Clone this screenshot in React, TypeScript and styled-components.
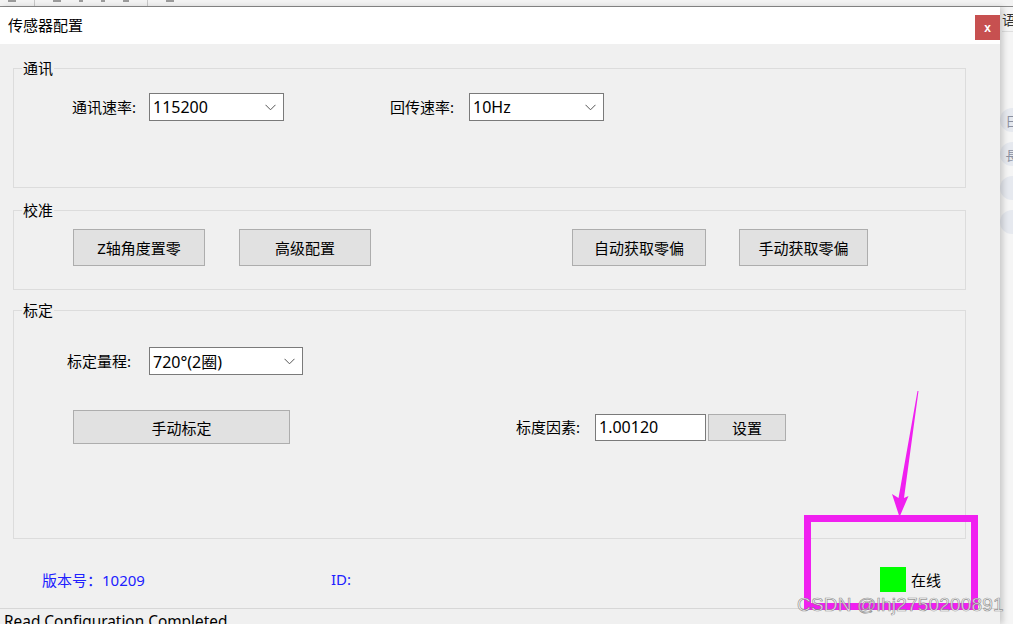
import styled, { createGlobalStyle } from 'styled-components'

const GlobalStyle = createGlobalStyle`
  html, body {
    margin: 0;
    padding: 0;
    background: #f4f4f4;
  }
  body {
    font-family: 'Segoe UI', 'Noto Sans', 'Noto Sans CJK SC', sans-serif;
    color: #000;
  }
`

const Screen = styled.div`
  position: relative;
  width: 1013px;
  height: 624px;
  overflow: hidden;
  background: #f4f4f4;
`

const TopStrip = styled.div`
  height: 6px;
  display: flex;
  align-items: flex-start;
  gap: 18px;
  padding-left: 8px;
  background: #f3f3f3;
  border-bottom: 1px solid #8c8c8c;
`

const ToolBit = styled.span<{ $w: number }>`
  width: ${({ $w }) => $w}px;
  height: 2px;
  background: #9a9a9a;
`

const ToolSep = styled.span`
  width: 1px;
  height: 6px;
  background: #c8c8c8;
`

const MainRow = styled.div`
  display: flex;
  height: 617px;
`

const Dialog = styled.div`
  width: 1000px;
  flex: none;
  display: flex;
  flex-direction: column;
  background: #f0f0f0;
  box-shadow: 3px 0 6px rgba(0, 0, 0, 0.18);
  position: relative;
  z-index: 1;
`

const TitleBar = styled.div`
  height: 37px;
  flex: none;
  display: flex;
  align-items: flex-start;
  justify-content: space-between;
  background: #fff;
`

const Title = styled.div`
  padding: 8px 0 0 8px;
  font-size: 15px;
  line-height: 20px;
`

const CloseButton = styled.div`
  width: 25px;
  height: 25px;
  margin-top: 8px;
  display: flex;
  align-items: center;
  justify-content: center;
  background: #c75050;
  color: #fff;
  font: bold 12px 'Liberation Sans', sans-serif;
`

const Body = styled.div`
  flex: 1;
  padding-left: 13px;
`

const GroupBox = styled.fieldset<{ $h: number; $mt: number }>`
  box-sizing: border-box;
  width: 953px;
  height: ${({ $h }) => $h}px;
  margin: ${({ $mt }) => $mt}px 0 0;
  padding: 0;
  border: 1px solid #dcdcdc;
  min-inline-size: auto;
`

const Legend = styled.legend`
  margin-left: 8px;
  padding: 0 1px;
  font-size: 15px;
  line-height: 20px;
`

const FieldRow = styled.div<{ $pt: number; $pl: number }>`
  display: flex;
  align-items: center;
  padding: ${({ $pt }) => $pt}px 0 0 ${({ $pl }) => $pl}px;
`

const Label = styled.span<{ $w: number; $ml?: number }>`
  width: ${({ $w }) => $w}px;
  margin-left: ${({ $ml }) => $ml ?? 0}px;
  flex: none;
  font-size: 15px;
  line-height: 20px;
`

const SelectBox = styled.div<{ $w: number }>`
  box-sizing: border-box;
  width: ${({ $w }) => $w}px;
  height: 28px;
  display: flex;
  align-items: center;
  justify-content: space-between;
  padding: 0 7px 0 3px;
  background: #fff;
  border: 1px solid #7a7a7a;
  font-size: 16px;
`

const TextInput = styled.div`
  box-sizing: border-box;
  width: 111px;
  height: 27px;
  display: flex;
  align-items: center;
  padding-left: 3px;
  background: #fff;
  border: 1px solid #7a7a7a;
  font-size: 16px;
`

const Button = styled.div<{ $w: number; $h: number; $ml?: number }>`
  box-sizing: border-box;
  width: ${({ $w }) => $w}px;
  height: ${({ $h }) => $h}px;
  margin-left: ${({ $ml }) => $ml ?? 0}px;
  flex: none;
  display: flex;
  align-items: center;
  justify-content: center;
  background: #e1e1e1;
  border: 1px solid #adadad;
  font-size: 15px;
`

const Footer = styled.div`
  height: 69px;
  padding: 11px 0 0 29px;
  box-sizing: border-box;
  display: flex;
  align-items: center;
  font-size: 15px;
`

const BlueText = styled.span<{ $w?: number }>`
  color: #2020ff;
  width: ${({ $w }) => ($w ? `${$w}px` : 'auto')};
  flex: none;
`

const Spacer = styled.div`
  flex: 1;
`

const OnlineLamp = styled.span`
  width: 26px;
  height: 25px;
  background: #00ff00;
  margin-right: 5px;
`

const OnlineText = styled.span`
  margin-right: 59px;
`

const StatusBar = styled.div`
  flex: none;
  height: 16px;
  padding: 3px 0 0 4px;
  border-top: 1px solid #d7d7d7;
  font-size: 15.4px;
  line-height: 20px;
  white-space: nowrap;
`

const SideStrip = styled.div`
  flex: 1;
  background: #f5f5f5;
  display: flex;
  flex-direction: column;
  align-items: flex-start;
  overflow: hidden;
`

const SideHeading = styled.div`
  margin: 2px 0 0 2px;
  height: 22px;
  width: 100%;
  border-bottom: 1px solid #dedede;
  font: 14px 'Noto Sans CJK SC', sans-serif;
  color: #333;
  white-space: nowrap;
`

const SideBubble = styled.div<{ $mt: number }>`
  margin: ${({ $mt }) => $mt}px 0 0 0;
  width: 24px;
  height: 24px;
  flex: none;
  border-radius: 50%;
  background: #e6e9ef;
  color: #8a90a0;
  font: 13px 'Noto Sans CJK SC', sans-serif;
  display: flex;
  align-items: center;
  justify-content: center;
`

const Annotation = styled.div`
  position: absolute;
  left: 804px;
  top: 515px;
  width: 174px;
  height: 95px;
  box-sizing: border-box;
  border: 7px solid #f020f0;
  pointer-events: none;
  z-index: 3;
`

const ArrowSvg = styled.svg`
  position: absolute;
  left: 0;
  top: 0;
  z-index: 3;
  pointer-events: none;
`

const Watermark = styled.div`
  position: absolute;
  left: 797px;
  top: 594px;
  z-index: 4;
  font: 19px 'Liberation Sans', sans-serif;
  letter-spacing: 0.2px;
  color: rgba(255, 255, 255, 0.8);
  -webkit-text-stroke: 0.7px rgba(110, 110, 110, 0.75);
  white-space: nowrap;
`

const Chevron = () => (
  <svg width="11" height="7" viewBox="0 0 11 7">
    <path d="M0.5 0.8 L5.5 5.8 L10.5 0.8" fill="none" stroke="#555" strokeWidth="1" />
  </svg>
)

const Select = ({ w, value }: { w: number; value: string }) => (
  <SelectBox $w={w}>
    <span>{value}</span>
    <Chevron />
  </SelectBox>
)

export default function App() {
  return (
    <>
      <GlobalStyle />
      <Screen>
        <TopStrip>
          <ToolBit $w={8} />
          <ToolSep />
          <ToolBit $w={8} />
          <ToolBit $w={4} />
          <ToolBit $w={4} />
          <ToolBit $w={6} />
          <ToolSep />
          <ToolBit $w={8} />
        </TopStrip>
        <MainRow>
          <Dialog>
            <TitleBar>
              <Title>传感器配置</Title>
              <CloseButton>x</CloseButton>
            </TitleBar>
            <Body>
              <GroupBox $h={130} $mt={14}>
                <Legend>通讯</Legend>
                <FieldRow $pt={15} $pl={58}>
                  <Label $w={77}>通讯速率:</Label>
                  <Select w={135} value="115200" />
                  <Label $w={79} $ml={106}>回传速率:</Label>
                  <Select w={135} value="10Hz" />
                </FieldRow>
              </GroupBox>

              <GroupBox $h={90} $mt={12}>
                <Legend>校准</Legend>
                <FieldRow $pt={9} $pl={59}>
                  <Button $w={132} $h={37}>Z轴角度置零</Button>
                  <Button $w={132} $h={37} $ml={34}>高级配置</Button>
                  <Button $w={134} $h={37} $ml={201}>自动获取零偏</Button>
                  <Button $w={129} $h={37} $ml={33}>手动获取零偏</Button>
                </FieldRow>
              </GroupBox>

              <GroupBox $h={239} $mt={10}>
                <Legend>标定</Legend>
                <FieldRow $pt={27} $pl={53}>
                  <Label $w={82}>标定量程:</Label>
                  <Select w={154} value="720°(2圈)" />
                </FieldRow>
                <FieldRow $pt={35} $pl={59}>
                  <Button $w={217} $h={34}>手动标定</Button>
                  <Label $w={79} $ml={226}>标度因素:</Label>
                  <TextInput>1.00120</TextInput>
                  <Button $w={78} $h={27} $ml={2}>设置</Button>
                </FieldRow>
              </GroupBox>

              <Footer>
                <BlueText $w={289}>版本号：10209</BlueText>
                <BlueText>ID:</BlueText>
                <Spacer />
                <OnlineLamp />
                <OnlineText>在线</OnlineText>
              </Footer>
            </Body>
            <StatusBar>Read Configuration Completed</StatusBar>
          </Dialog>
          <SideStrip>
            <SideHeading>语言</SideHeading>
            <SideBubble $mt={76}>日</SideBubble>
            <SideBubble $mt={10}>長</SideBubble>
            <SideBubble $mt={10} />
            <SideBubble $mt={10} />
          </SideStrip>
        </MainRow>

        <ArrowSvg width="1013" height="624" viewBox="0 0 1013 624">
          <polygon
            points="918.5,391 904,498 908.5,496 899.5,517 892,494 898.5,498 917.5,391"
            fill="#f020f0"
          />
        </ArrowSvg>
        <Annotation />
        <Watermark>CSDN @lhj2750200891</Watermark>
      </Screen>
    </>
  )
}
